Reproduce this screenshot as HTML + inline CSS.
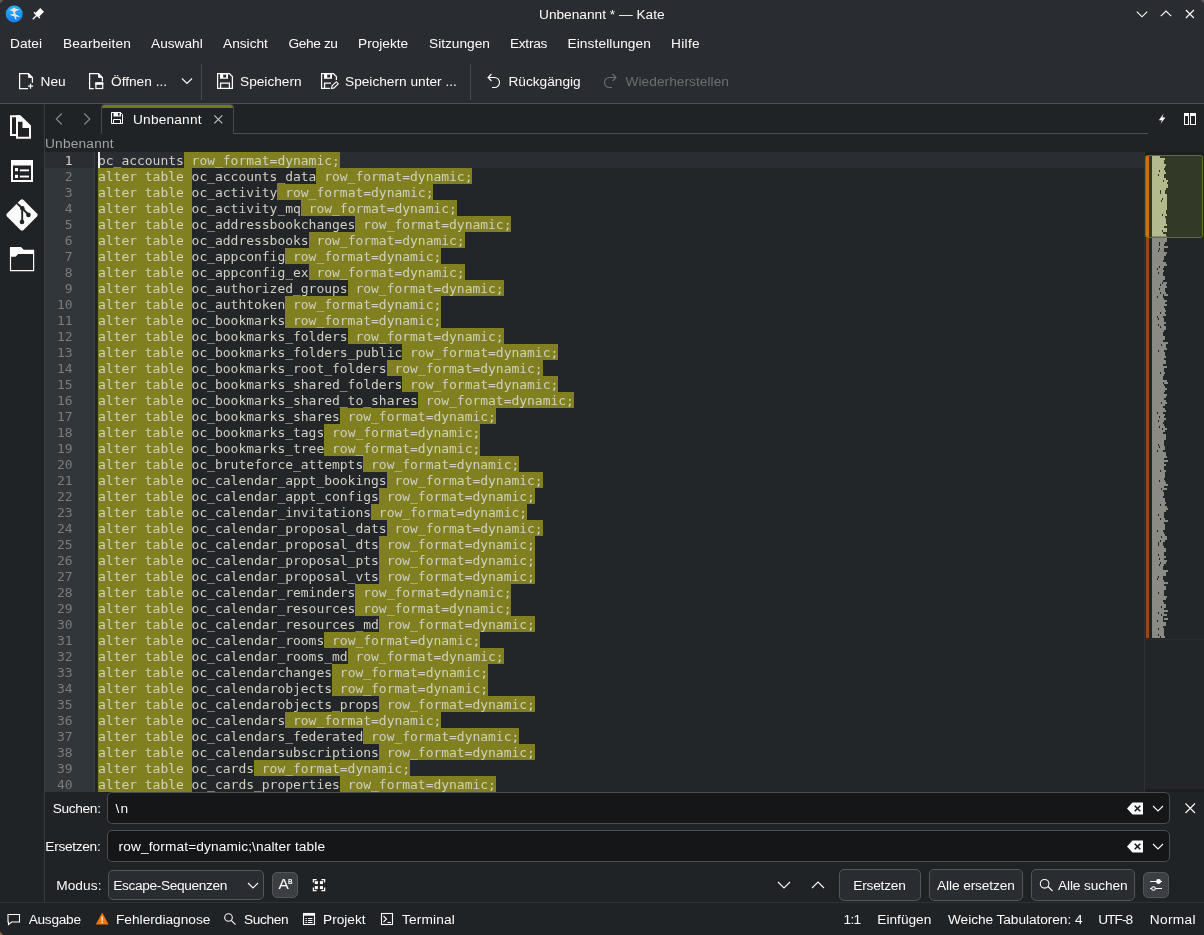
<!DOCTYPE html>
<html lang="de">
<head>
<meta charset="utf-8">
<title>Unbenannt * — Kate</title>
<style>
*{box-sizing:border-box;margin:0;padding:0}
html,body{width:1204px;height:935px;overflow:hidden;background:#202326}
body{position:relative;font-family:"Liberation Sans",sans-serif;font-size:13.7px;color:#fcfcfc}
.abs,.t{position:absolute}
.t{white-space:nowrap;line-height:16px;height:16px}
svg{position:absolute;overflow:visible}
#titlebar{position:absolute;left:0;top:0;width:1204px;height:28px;background:#292c30}
#menubar{position:absolute;left:0;top:28px;width:1204px;height:32px;background:#292c30}
#toolbar{position:absolute;left:0;top:60px;width:1204px;height:43px;background:#292c30}
#tbline{position:absolute;left:0;top:103px;width:1204px;height:1px;background:#4c4f53}
#sidebar{position:absolute;left:0;top:104px;width:44px;height:801px;background:#202326}
#sideline{position:absolute;left:44px;top:104px;width:1px;height:798px;background:#393c3f}
#tabbar{position:absolute;left:45px;top:104px;width:1159px;height:30px;background:#202326}
#tabline{position:absolute;left:234px;top:133px;width:914px;height:1px;background:#4c4f53}
#tab{position:absolute;left:101px;top:104px;width:133px;height:30px;background:#202326;border:1px solid #46494c;border-bottom:none;border-radius:4px 4px 0 0;overflow:hidden}
#tab:before{content:"";position:absolute;left:0;top:0;right:0;height:3px;background:#6c7d1f}
#crumb{position:absolute;left:45px;top:134px;width:1159px;height:18px;background:#202326}
#editor{position:absolute;left:45px;top:152px;width:1100px;height:640px;background:#232629;overflow:hidden;
 font-family:"DejaVu Sans Mono","Liberation Mono",monospace;font-size:13px;color:#cfcfc2;letter-spacing:-0.026px}
#gutter{position:absolute;left:0;top:0;width:49px;height:640px;background:#31363b}
#edsep{position:absolute;left:1099px;top:0;width:1px;height:640px;background:#2e3236}
#gutsep{position:absolute;left:49px;top:0;width:1px;height:640px;background:#3a3f44}
#editor p{position:relative;height:16px;line-height:18px;white-space:pre;padding-left:53px}
#editor p.cur{background:linear-gradient(to right,#2a2e32 0,#2a2e32 49px,#3a3f44 49px,#3a3f44 50px,#232629 50px,#232629 53px,#2a2e32 53px)}
#editor i{position:absolute;left:0;top:0;width:27.6px;text-align:right;font-style:normal;color:#7a7c7d}
#editor p.cur i{color:#cfcfc2}
#editor b{font-weight:normal;background:#808021;display:inline-block;height:16px;vertical-align:top}
#cursor{position:absolute;left:53px;top:0;width:2px;height:16px;background:#ececec}
#minimap{position:absolute;left:1145px;top:152px;width:59px;height:640px;background:#232629}
#searchbar{position:absolute;left:45px;top:792px;width:1159px;height:113px;background:#202326}
#statusbar{position:absolute;left:0;top:902px;width:1204px;height:33px;background:#202326;border-top:1px solid #2f3235}
.inp{position:absolute;background:#141618;border:1px solid #4a4d51;border-radius:5px}
.btn{position:absolute;background:#292c30;border:1px solid #54575a;border-radius:5px}
.btn.on{background:#3b3e42;border-color:#54575a}
.lbl{color:#fcfcfc}
</style>
</head>
<body><div id="app" style="position:absolute;left:0;top:0;width:1204px;height:935px;will-change:transform">
<div id="titlebar">
 <svg style="left:5px;top:5px" width="18" height="18" viewBox="0 0 18 18">
  <defs><linearGradient id="kg" x1="0" y1="0" x2="0" y2="1"><stop offset="0" stop-color="#21b4f7"/><stop offset="1" stop-color="#1a7bf0"/></linearGradient></defs>
  <circle cx="9.2" cy="9" r="8.5" fill="url(#kg)"/>
  <path d="M3.8 4.9 C6 4.7 8 3.6 9.3 2.2 C9.9 3.7 12 4.3 14.6 4 C12.6 5.4 10.8 6.2 9.9 7.2 C10.1 8.2 10.5 9 11.1 9.6 C12.6 10.2 14 11 15 12 C13.6 11.7 12.2 11.5 11.2 11.5 C11.1 12.8 11.2 14.2 11.4 15.6 C10.2 14.2 9.5 12.8 9.1 11.2 C7.5 11.1 6 10.5 4.8 9.5 C6.2 9.5 7.6 9.2 8.6 8.7 C8.3 7.9 8.1 7.3 8 6.8 C6.9 5.8 5.4 5.1 3.8 4.9 Z" fill="#e6e2dc"/>
 </svg>
 <svg style="left:30px;top:4px" width="18" height="18" viewBox="30 4 18 18"><g transform="translate(36.9 15.1) rotate(-45)" fill="#fcfcfc"><rect x="-5.8" y="-0.65" width="6" height="1.3"/><rect x="-0.7" y="-4.1" width="1.4" height="8.2"/><rect x="0" y="-2.6" width="7.4" height="5.2"/></g></svg>
 <span class="t" style="left:539px;top:7px">Unbenannt * — Kate</span>
 <svg style="left:1130px;top:2px" width="72" height="24" viewBox="0 0 72 24" fill="none" stroke="#fcfcfc" stroke-width="1.15">
  <path d="M6.8 9.6 L12 14.8 L17.2 9.6"/>
  <path d="M30.8 14.2 L36 9 L41.2 14.2"/>
  <path d="M55.9 8 L63.9 16 M63.9 8 L55.9 16"/>
 </svg>
</div>
<div id="menubar">
 <span class="t" style="left:10px;top:8px">Datei</span>
 <span class="t" style="left:63px;top:8px;letter-spacing:0.19px">Bearbeiten</span>
 <span class="t" style="left:151px;top:8px">Auswahl</span>
 <span class="t" style="left:223px;top:8px">Ansicht</span>
 <span class="t" style="left:288.5px;top:8px;letter-spacing:-0.38px">Gehe zu</span>
 <span class="t" style="left:358px;top:8px">Projekte</span>
 <span class="t" style="left:429px;top:8px">Sitzungen</span>
 <span class="t" style="left:510px;top:8px;letter-spacing:-0.3px">Extras</span>
 <span class="t" style="left:567.5px;top:8px;letter-spacing:0.1px">Einstellungen</span>
 <span class="t" style="left:671px;top:8px;letter-spacing:0.32px">Hilfe</span>
</div>
<div id="toolbar">
 <!-- new -->
 <svg style="left:18px;top:13px" width="16" height="16" viewBox="0 0 16 16" fill="none" stroke="#fcfcfc" stroke-width="1.25" stroke-linejoin="miter">
  <path d="M10 15.5 H1.6 V0.6 H10.5 L14.4 4.5 V9.8"/><path d="M10.5 0.6 L14.4 4.5 H10.5 Z" fill="#fcfcfc" stroke-width="0.8"/><path d="M12.5 10.7 V15.8 M10 13.2 H15.1"/>
 </svg>
 <span class="t" style="left:40.5px;top:14px">Neu</span>
 <!-- open -->
 <svg style="left:88px;top:13px" width="16" height="16" viewBox="0 0 16 16" fill="none" stroke="#fcfcfc" stroke-width="1.25" stroke-linejoin="miter">
  <path d="M5.8 15.5 H1.6 V0.6 H10.5 L14.4 4.5 V8.4"/><path d="M10.5 0.6 L14.4 4.5 H10.5 Z" fill="#fcfcfc" stroke-width="0.8"/><rect x="7.9" y="10" width="6.8" height="5.5" stroke-width="1.2"/><rect x="7.3" y="9.4" width="8" height="2.4" fill="#fcfcfc" stroke="none"/>
 </svg>
 <span class="t" style="left:111px;top:14px">Öffnen ...</span>
 <svg style="left:181px;top:17px" width="12" height="8" viewBox="0 0 12 8" fill="none" stroke="#fcfcfc" stroke-width="1.1"><path d="M1 1.5 L6 6.5 L11 1.5"/></svg>
 <div class="abs" style="left:201px;top:4px;width:1px;height:36px;background:#46494c"></div>
 <!-- save -->
 <svg style="left:217px;top:13px" width="16" height="16" viewBox="0 0 16 16" fill="none" stroke="#fcfcfc" stroke-width="1.25">
  <path d="M0.6 0.6 H12.4 L15.4 3.6 V15.4 H0.6 Z"/><path d="M3 0.6 H11 V5.8 H3 Z M6.2 1.6 V4.4 H9.2 V1.6 Z" fill="#fcfcfc" fill-rule="evenodd" stroke="none"/><path d="M3.6 15.4 V10.2 H12.4 V15.4"/>
 </svg>
 <span class="t" style="left:240px;top:14px">Speichern</span>
 <!-- save as -->
 <svg style="left:321px;top:13px" width="18" height="16" viewBox="0 0 18 16" fill="none" stroke="#fcfcfc" stroke-width="1.25">
  <path d="M9 15.4 H0.6 V0.6 H12.4 L15.4 3.6 V7"/><path d="M3 0.6 H11 V5.8 H3 Z M6.2 1.6 V4.4 H9.2 V1.6 Z" fill="#fcfcfc" fill-rule="evenodd" stroke="none"/><path d="M3.6 15.4 V10.2 H10"/><path d="M10.4 15.6 L11.1 12.9 L15.3 8.7 L17.3 10.7 L13.1 14.9 Z" stroke-width="1.1"/>
 </svg>
 <span class="t" style="left:345px;top:14px">Speichern unter ...</span>
 <div class="abs" style="left:470px;top:4px;width:1px;height:36px;background:#46494c"></div>
 <!-- undo -->
 <svg style="left:486px;top:13px" width="16" height="16" viewBox="0 0 16 16" fill="none" stroke="#fcfcfc" stroke-width="1.1">
  <path d="M2.5 4.5 H8.5 A5 5 0 0 1 8.5 14.5 H6"/><path d="M5.5 1 L2 4.5 L5.5 8"/>
 </svg>
 <span class="t" style="left:508.4px;top:14px">Rückgängig</span>
 <!-- redo -->
 <svg style="left:602px;top:13px" width="16" height="16" viewBox="0 0 16 16" fill="none" stroke="#6c6f72" stroke-width="1.1">
  <path d="M13.5 4.5 H7.5 A5 5 0 0 0 7.5 14.5 H10"/><path d="M10.5 1 L14 4.5 L10.5 8"/>
 </svg>
 <span class="t" style="left:625.5px;top:14px;color:#6c6f72;letter-spacing:0.05px">Wiederherstellen</span>
</div>
<div id="tbline"></div>
<div id="sidebar">
 <!-- documents -->
 <svg style="left:0;top:0" width="44" height="180" viewBox="0 104 44 180">
  <g fill="none" stroke="#fcfcfc" stroke-width="2">
   <path d="M20 116.2 H11 V135 H16"/>
   <path d="M23 120.5 H17 V137.8 H30 V127"/>
  </g>
  <path d="M16 115.2 H20.4 L31 125.4 V128 H22.5 V121.5 H16 Z" fill="#fcfcfc"/>
  <!-- list -->
  <rect x="12" y="161" width="20" height="20" fill="none" stroke="#fcfcfc" stroke-width="2"/>
  <rect x="11" y="160" width="22" height="5.5" fill="#fcfcfc"/>
  <rect x="15" y="168" width="3" height="3.2" fill="#fcfcfc"/><rect x="19.8" y="169.4" width="9.2" height="1.9" fill="#fcfcfc"/>
  <rect x="15" y="174.8" width="3" height="3.2" fill="#fcfcfc"/><rect x="19.8" y="175.6" width="9.2" height="1.9" fill="#fcfcfc"/>
  <!-- git -->
  <rect x="10.3" y="203.3" width="23.4" height="23.4" rx="2.2" transform="rotate(45 22 215)" fill="#fcfcfc"/>
  <g stroke="#202326" stroke-width="1.9" fill="none"><path d="M17 203.4 L22.3 208.3 L28.5 214.8 M22.2 208 V222"/></g>
  <circle cx="22.3" cy="208.2" r="2.2" fill="#202326"/><circle cx="28.4" cy="214.9" r="2.3" fill="#202326"/><circle cx="22" cy="222" r="2.3" fill="#202326"/>
  <!-- folder -->
  <path d="M10.5 248 V270.6 H33.6 V250" fill="none" stroke="#fcfcfc" stroke-width="1.2"/>
  <path d="M10 247 H21 L23.7 249.7 H34 V254 H18.2 L15.5 256.7 H10 Z" fill="#fcfcfc"/>
 </svg>
</div>
<div id="sideline"></div>
<div id="tabbar"></div>
<div id="tabline"></div>
<div id="tab"></div>
<svg style="left:45px;top:104px" width="200" height="30" viewBox="45 104 200 30" fill="none">
 <path d="M61.8 113.5 L56.3 119 L61.8 124.5" stroke="#888a8c" stroke-width="1.1"/>
 <path d="M84.3 113.5 L89.8 119 L84.3 124.5" stroke="#888a8c" stroke-width="1.1"/>
 <!-- save small -->
 <path d="M111.5 112.5 H120.5 L122.5 114.5 V123.5 H111.5 Z" stroke="#fcfcfc" stroke-width="1"/>
 <path d="M111 112 H120.6 L121 112.4 V116.6 H113.5 V112 Z M118 113 V115.6 H119.6 V113 Z" fill="#fcfcfc" fill-rule="evenodd"/>
 <path d="M113.5 123.5 V119.5 H120.5 V123.5" stroke="#fcfcfc" stroke-width="1"/>
 <path d="M214.3 115.3 L222.3 123.3 M222.3 115.3 L214.3 123.3" stroke="#c4c5c6" stroke-width="1.1"/>
</svg>
<span class="t" style="left:133px;top:112px;letter-spacing:0.19px">Unbenannt</span>
<svg style="left:1150px;top:108px" width="54" height="22" viewBox="1150 108 54 22">
 <path d="M1163.5 113.8 L1158.8 120.2 H1161.9 L1160.4 124 L1165.4 117.6 H1162.4 Z" fill="#fcfcfc"/>
 <path d="M1184 113 H1189 V125 H1184 Z M1185 116 V124 H1188 V116 Z M1190 113 H1196 V125 H1190 Z M1191 116 V124 H1195 V116 Z" fill="#fcfcfc" fill-rule="evenodd"/>
</svg>
<div id="crumb"><span class="t" style="left:0;top:2px;color:#a1a3a4;letter-spacing:0.2px">Unbenannt</span></div>
<div id="editor"><div id="gutter"></div><div id="gutsep"></div>
<p class="cur"><i>1</i>oc_accounts<b> row_format=dynamic;</b></p>
<p><i>2</i><b>alter table </b>oc_accounts_data<b> row_format=dynamic;</b></p>
<p><i>3</i><b>alter table </b>oc_activity<b> row_format=dynamic;</b></p>
<p><i>4</i><b>alter table </b>oc_activity_mq<b> row_format=dynamic;</b></p>
<p><i>5</i><b>alter table </b>oc_addressbookchanges<b> row_format=dynamic;</b></p>
<p><i>6</i><b>alter table </b>oc_addressbooks<b> row_format=dynamic;</b></p>
<p><i>7</i><b>alter table </b>oc_appconfig<b> row_format=dynamic;</b></p>
<p><i>8</i><b>alter table </b>oc_appconfig_ex<b> row_format=dynamic;</b></p>
<p><i>9</i><b>alter table </b>oc_authorized_groups<b> row_format=dynamic;</b></p>
<p><i>10</i><b>alter table </b>oc_authtoken<b> row_format=dynamic;</b></p>
<p><i>11</i><b>alter table </b>oc_bookmarks<b> row_format=dynamic;</b></p>
<p><i>12</i><b>alter table </b>oc_bookmarks_folders<b> row_format=dynamic;</b></p>
<p><i>13</i><b>alter table </b>oc_bookmarks_folders_public<b> row_format=dynamic;</b></p>
<p><i>14</i><b>alter table </b>oc_bookmarks_root_folders<b> row_format=dynamic;</b></p>
<p><i>15</i><b>alter table </b>oc_bookmarks_shared_folders<b> row_format=dynamic;</b></p>
<p><i>16</i><b>alter table </b>oc_bookmarks_shared_to_shares<b> row_format=dynamic;</b></p>
<p><i>17</i><b>alter table </b>oc_bookmarks_shares<b> row_format=dynamic;</b></p>
<p><i>18</i><b>alter table </b>oc_bookmarks_tags<b> row_format=dynamic;</b></p>
<p><i>19</i><b>alter table </b>oc_bookmarks_tree<b> row_format=dynamic;</b></p>
<p><i>20</i><b>alter table </b>oc_bruteforce_attempts<b> row_format=dynamic;</b></p>
<p><i>21</i><b>alter table </b>oc_calendar_appt_bookings<b> row_format=dynamic;</b></p>
<p><i>22</i><b>alter table </b>oc_calendar_appt_configs<b> row_format=dynamic;</b></p>
<p><i>23</i><b>alter table </b>oc_calendar_invitations<b> row_format=dynamic;</b></p>
<p><i>24</i><b>alter table </b>oc_calendar_proposal_dats<b> row_format=dynamic;</b></p>
<p><i>25</i><b>alter table </b>oc_calendar_proposal_dts<b> row_format=dynamic;</b></p>
<p><i>26</i><b>alter table </b>oc_calendar_proposal_pts<b> row_format=dynamic;</b></p>
<p><i>27</i><b>alter table </b>oc_calendar_proposal_vts<b> row_format=dynamic;</b></p>
<p><i>28</i><b>alter table </b>oc_calendar_reminders<b> row_format=dynamic;</b></p>
<p><i>29</i><b>alter table </b>oc_calendar_resources<b> row_format=dynamic;</b></p>
<p><i>30</i><b>alter table </b>oc_calendar_resources_md<b> row_format=dynamic;</b></p>
<p><i>31</i><b>alter table </b>oc_calendar_rooms<b> row_format=dynamic;</b></p>
<p><i>32</i><b>alter table </b>oc_calendar_rooms_md<b> row_format=dynamic;</b></p>
<p><i>33</i><b>alter table </b>oc_calendarchanges<b> row_format=dynamic;</b></p>
<p><i>34</i><b>alter table </b>oc_calendarobjects<b> row_format=dynamic;</b></p>
<p><i>35</i><b>alter table </b>oc_calendarobjects_props<b> row_format=dynamic;</b></p>
<p><i>36</i><b>alter table </b>oc_calendars<b> row_format=dynamic;</b></p>
<p><i>37</i><b>alter table </b>oc_calendars_federated<b> row_format=dynamic;</b></p>
<p><i>38</i><b>alter table </b>oc_calendarsubscriptions<b> row_format=dynamic;</b></p>
<p><i>39</i><b>alter table </b>oc_cards<b> row_format=dynamic;</b></p>
<p><i>40</i><b>alter table </b>oc_cards_properties<b> row_format=dynamic;</b></p><div id="cursor"></div><div id="edsep"></div></div>
<div id="minimap">
<svg style="left:0;top:0" width="59" height="640" viewBox="0 0 59 640" shape-rendering="crispEdges">
<rect x="0" y="0" width="59" height="3" fill="#1b1d20"/>
<rect x="0" y="637" width="59" height="3" fill="#1b1d20"/>
<rect x="0" y="487" width="59" height="1" fill="#2a2d30"/>
<rect x="1" y="4" width="3" height="482" fill="#9b471b"/>
<rect x="7" y="4" width="8" height="2" fill="#bdc1a5"/>
<rect x="7" y="6" width="13" height="2" fill="#bdc1a5"/>
<rect x="7" y="8" width="12" height="2" fill="#bdc1a5"/>
<rect x="7" y="10" width="12" height="2" fill="#bdc1a5"/>
<rect x="7" y="12" width="14" height="2" fill="#bdc1a5"/>
<rect x="7" y="14" width="13" height="2" fill="#bdc1a5"/>
<rect x="7" y="16" width="12" height="2" fill="#bdc1a5"/>
<rect x="7" y="18" width="7" height="2" fill="#bdc1a5"/><rect x="15" y="18" width="5" height="2" fill="#bdc1a5"/>
<rect x="7" y="20" width="14" height="2" fill="#bdc1a5"/>
<rect x="7" y="22" width="6" height="2" fill="#bdc1a5"/><rect x="14" y="22" width="5" height="2" fill="#bdc1a5"/>
<rect x="7" y="24" width="12" height="2" fill="#bdc1a5"/>
<rect x="7" y="26" width="14" height="2" fill="#bdc1a5"/>
<rect x="7" y="28" width="11" height="2" fill="#bdc1a5"/><rect x="19" y="28" width="4" height="2" fill="#bdc1a5"/>
<rect x="7" y="30" width="15" height="2" fill="#bdc1a5"/>
<rect x="7" y="32" width="16" height="2" fill="#bdc1a5"/>
<rect x="7" y="34" width="16" height="2" fill="#bdc1a5"/>
<rect x="7" y="36" width="14" height="2" fill="#bdc1a5"/>
<rect x="7" y="38" width="8" height="2" fill="#bdc1a5"/><rect x="16" y="38" width="4" height="2" fill="#bdc1a5"/>
<rect x="7" y="40" width="8" height="2" fill="#bdc1a5"/><rect x="16" y="40" width="4" height="2" fill="#bdc1a5"/>
<rect x="7" y="42" width="15" height="2" fill="#bdc1a5"/>
<rect x="7" y="44" width="15" height="2" fill="#bdc1a5"/>
<rect x="7" y="46" width="10" height="2" fill="#bdc1a5"/><rect x="18" y="46" width="4" height="2" fill="#bdc1a5"/>
<rect x="7" y="48" width="9" height="2" fill="#bdc1a5"/><rect x="17" y="48" width="5" height="2" fill="#bdc1a5"/>
<rect x="7" y="50" width="15" height="2" fill="#bdc1a5"/>
<rect x="7" y="52" width="15" height="2" fill="#bdc1a5"/>
<rect x="7" y="54" width="15" height="2" fill="#bdc1a5"/>
<rect x="7" y="56" width="15" height="2" fill="#bdc1a5"/>
<rect x="7" y="58" width="14" height="2" fill="#bdc1a5"/>
<rect x="7" y="60" width="14" height="2" fill="#bdc1a5"/>
<rect x="7" y="62" width="10" height="2" fill="#bdc1a5"/><rect x="18" y="62" width="4" height="2" fill="#bdc1a5"/>
<rect x="7" y="64" width="13" height="2" fill="#bdc1a5"/>
<rect x="7" y="66" width="14" height="2" fill="#bdc1a5"/>
<rect x="7" y="68" width="14" height="2" fill="#bdc1a5"/>
<rect x="7" y="70" width="14" height="2" fill="#bdc1a5"/>
<rect x="7" y="72" width="15" height="2" fill="#bdc1a5"/>
<rect x="7" y="74" width="12" height="2" fill="#bdc1a5"/>
<rect x="7" y="76" width="15" height="2" fill="#bdc1a5"/>
<rect x="7" y="78" width="10" height="2" fill="#bdc1a5"/><rect x="18" y="78" width="4" height="2" fill="#bdc1a5"/>
<rect x="7" y="80" width="11" height="2" fill="#bdc1a5"/>
<rect x="7" y="82" width="14" height="2" fill="#bdc1a5"/>
<rect x="7" y="84" width="15" height="2" fill="#8b8b85"/>
<rect x="7" y="86" width="15" height="2" fill="#8b8b85"/>
<rect x="7" y="88" width="15" height="2" fill="#8b8b85"/>
<rect x="7" y="90" width="7" height="2" fill="#8b8b85"/><rect x="15" y="90" width="5" height="2" fill="#8b8b85"/>
<rect x="7" y="92" width="7" height="2" fill="#8b8b85"/><rect x="15" y="92" width="4" height="2" fill="#8b8b85"/>
<rect x="7" y="94" width="16" height="2" fill="#8b8b85"/>
<rect x="7" y="96" width="7" height="2" fill="#8b8b85"/><rect x="15" y="96" width="4" height="2" fill="#8b8b85"/>
<rect x="7" y="98" width="6" height="2" fill="#8b8b85"/><rect x="14" y="98" width="5" height="2" fill="#8b8b85"/>
<rect x="7" y="100" width="15" height="2" fill="#8b8b85"/>
<rect x="7" y="102" width="14" height="2" fill="#8b8b85"/>
<rect x="7" y="104" width="12" height="2" fill="#8b8b85"/>
<rect x="7" y="106" width="12" height="2" fill="#8b8b85"/>
<rect x="7" y="108" width="11" height="2" fill="#8b8b85"/>
<rect x="7" y="110" width="14" height="2" fill="#8b8b85"/>
<rect x="7" y="112" width="15" height="2" fill="#8b8b85"/>
<rect x="7" y="114" width="7" height="2" fill="#8b8b85"/><rect x="15" y="114" width="4" height="2" fill="#8b8b85"/>
<rect x="7" y="116" width="5" height="2" fill="#8b8b85"/><rect x="13" y="116" width="5" height="2" fill="#8b8b85"/>
<rect x="7" y="118" width="12" height="2" fill="#8b8b85"/>
<rect x="7" y="120" width="6" height="2" fill="#8b8b85"/><rect x="14" y="120" width="4" height="2" fill="#8b8b85"/>
<rect x="7" y="122" width="11" height="2" fill="#8b8b85"/>
<rect x="7" y="124" width="13" height="2" fill="#8b8b85"/>
<rect x="7" y="126" width="13" height="2" fill="#8b8b85"/>
<rect x="7" y="128" width="11" height="2" fill="#8b8b85"/>
<rect x="7" y="130" width="10" height="2" fill="#8b8b85"/><rect x="18" y="130" width="4" height="2" fill="#8b8b85"/>
<rect x="7" y="132" width="8" height="2" fill="#8b8b85"/><rect x="16" y="132" width="5" height="2" fill="#8b8b85"/>
<rect x="7" y="134" width="15" height="2" fill="#8b8b85"/>
<rect x="7" y="136" width="7" height="2" fill="#8b8b85"/><rect x="15" y="136" width="5" height="2" fill="#8b8b85"/>
<rect x="7" y="138" width="13" height="2" fill="#8b8b85"/>
<rect x="7" y="140" width="8" height="2" fill="#8b8b85"/><rect x="16" y="140" width="5" height="2" fill="#8b8b85"/>
<rect x="7" y="142" width="11" height="2" fill="#8b8b85"/><rect x="19" y="142" width="4" height="2" fill="#8b8b85"/>
<rect x="7" y="144" width="5" height="2" fill="#8b8b85"/><rect x="13" y="144" width="5" height="2" fill="#8b8b85"/>
<rect x="7" y="146" width="12" height="2" fill="#8b8b85"/>
<rect x="7" y="148" width="15" height="2" fill="#8b8b85"/>
<rect x="7" y="150" width="13" height="2" fill="#8b8b85"/>
<rect x="7" y="152" width="15" height="2" fill="#8b8b85"/>
<rect x="7" y="154" width="12" height="2" fill="#8b8b85"/>
<rect x="7" y="156" width="13" height="2" fill="#8b8b85"/>
<rect x="7" y="158" width="14" height="2" fill="#8b8b85"/>
<rect x="7" y="160" width="8" height="2" fill="#8b8b85"/><rect x="16" y="160" width="4" height="2" fill="#8b8b85"/>
<rect x="7" y="162" width="14" height="2" fill="#8b8b85"/>
<rect x="7" y="164" width="5" height="2" fill="#8b8b85"/><rect x="13" y="164" width="5" height="2" fill="#8b8b85"/>
<rect x="7" y="166" width="6" height="2" fill="#8b8b85"/><rect x="14" y="166" width="5" height="2" fill="#8b8b85"/>
<rect x="7" y="168" width="12" height="2" fill="#8b8b85"/>
<rect x="7" y="170" width="14" height="2" fill="#8b8b85"/>
<rect x="7" y="172" width="6" height="2" fill="#8b8b85"/><rect x="14" y="172" width="5" height="2" fill="#8b8b85"/>
<rect x="7" y="174" width="8" height="2" fill="#8b8b85"/><rect x="16" y="174" width="5" height="2" fill="#8b8b85"/>
<rect x="7" y="176" width="14" height="2" fill="#8b8b85"/>
<rect x="7" y="178" width="12" height="2" fill="#8b8b85"/>
<rect x="7" y="180" width="11" height="2" fill="#8b8b85"/>
<rect x="7" y="182" width="11" height="2" fill="#8b8b85"/>
<rect x="7" y="184" width="13" height="2" fill="#8b8b85"/>
<rect x="7" y="186" width="13" height="2" fill="#8b8b85"/>
<rect x="7" y="188" width="11" height="2" fill="#8b8b85"/>
<rect x="7" y="190" width="16" height="2" fill="#8b8b85"/>
<rect x="7" y="192" width="9" height="2" fill="#8b8b85"/><rect x="17" y="192" width="4" height="2" fill="#8b8b85"/>
<rect x="7" y="194" width="14" height="2" fill="#8b8b85"/>
<rect x="7" y="196" width="15" height="2" fill="#8b8b85"/>
<rect x="7" y="198" width="6" height="2" fill="#8b8b85"/><rect x="14" y="198" width="5" height="2" fill="#8b8b85"/>
<rect x="7" y="200" width="13" height="2" fill="#8b8b85"/>
<rect x="7" y="202" width="13" height="2" fill="#8b8b85"/>
<rect x="7" y="204" width="14" height="2" fill="#8b8b85"/>
<rect x="7" y="206" width="12" height="2" fill="#8b8b85"/>
<rect x="7" y="208" width="14" height="2" fill="#8b8b85"/>
<rect x="7" y="210" width="14" height="2" fill="#8b8b85"/>
<rect x="7" y="212" width="11" height="2" fill="#8b8b85"/>
<rect x="7" y="214" width="15" height="2" fill="#8b8b85"/>
<rect x="7" y="216" width="12" height="2" fill="#8b8b85"/>
<rect x="7" y="218" width="12" height="2" fill="#8b8b85"/>
<rect x="7" y="220" width="8" height="2" fill="#8b8b85"/><rect x="16" y="220" width="4" height="2" fill="#8b8b85"/>
<rect x="7" y="222" width="12" height="2" fill="#8b8b85"/>
<rect x="7" y="224" width="11" height="2" fill="#8b8b85"/>
<rect x="7" y="226" width="11" height="2" fill="#8b8b85"/>
<rect x="7" y="228" width="15" height="2" fill="#8b8b85"/>
<rect x="7" y="230" width="11" height="2" fill="#8b8b85"/><rect x="19" y="230" width="4" height="2" fill="#8b8b85"/>
<rect x="7" y="232" width="12" height="2" fill="#8b8b85"/>
<rect x="7" y="234" width="13" height="2" fill="#8b8b85"/>
<rect x="7" y="236" width="15" height="2" fill="#8b8b85"/>
<rect x="7" y="238" width="13" height="2" fill="#8b8b85"/>
<rect x="7" y="240" width="12" height="2" fill="#8b8b85"/>
<rect x="7" y="242" width="15" height="2" fill="#8b8b85"/>
<rect x="7" y="244" width="14" height="2" fill="#8b8b85"/>
<rect x="7" y="246" width="12" height="2" fill="#8b8b85"/>
<rect x="7" y="248" width="14" height="2" fill="#8b8b85"/>
<rect x="7" y="250" width="9" height="2" fill="#8b8b85"/><rect x="17" y="250" width="5" height="2" fill="#8b8b85"/>
<rect x="7" y="252" width="13" height="2" fill="#8b8b85"/>
<rect x="7" y="254" width="11" height="2" fill="#8b8b85"/>
<rect x="7" y="256" width="13" height="2" fill="#8b8b85"/>
<rect x="7" y="258" width="14" height="2" fill="#8b8b85"/>
<rect x="7" y="260" width="5" height="2" fill="#8b8b85"/><rect x="13" y="260" width="5" height="2" fill="#8b8b85"/>
<rect x="7" y="262" width="13" height="2" fill="#8b8b85"/>
<rect x="7" y="264" width="7" height="2" fill="#8b8b85"/><rect x="15" y="264" width="4" height="2" fill="#8b8b85"/>
<rect x="7" y="266" width="14" height="2" fill="#8b8b85"/>
<rect x="7" y="268" width="6" height="2" fill="#8b8b85"/><rect x="14" y="268" width="5" height="2" fill="#8b8b85"/>
<rect x="7" y="270" width="11" height="2" fill="#8b8b85"/>
<rect x="7" y="272" width="12" height="2" fill="#8b8b85"/>
<rect x="7" y="274" width="7" height="2" fill="#8b8b85"/><rect x="15" y="274" width="5" height="2" fill="#8b8b85"/>
<rect x="7" y="276" width="10" height="2" fill="#8b8b85"/><rect x="18" y="276" width="4" height="2" fill="#8b8b85"/>
<rect x="7" y="278" width="13" height="2" fill="#8b8b85"/>
<rect x="7" y="280" width="11" height="2" fill="#8b8b85"/>
<rect x="7" y="282" width="14" height="2" fill="#8b8b85"/>
<rect x="7" y="284" width="14" height="2" fill="#8b8b85"/>
<rect x="7" y="286" width="14" height="2" fill="#8b8b85"/>
<rect x="7" y="288" width="12" height="2" fill="#8b8b85"/>
<rect x="7" y="290" width="12" height="2" fill="#8b8b85"/>
<rect x="7" y="292" width="6" height="2" fill="#8b8b85"/><rect x="14" y="292" width="5" height="2" fill="#8b8b85"/>
<rect x="7" y="294" width="7" height="2" fill="#8b8b85"/><rect x="15" y="294" width="5" height="2" fill="#8b8b85"/>
<rect x="7" y="296" width="13" height="2" fill="#8b8b85"/>
<rect x="7" y="298" width="5" height="2" fill="#8b8b85"/><rect x="13" y="298" width="5" height="2" fill="#8b8b85"/>
<rect x="7" y="300" width="14" height="2" fill="#8b8b85"/>
<rect x="7" y="302" width="14" height="2" fill="#8b8b85"/>
<rect x="7" y="304" width="15" height="2" fill="#8b8b85"/>
<rect x="7" y="306" width="12" height="2" fill="#8b8b85"/>
<rect x="7" y="308" width="16" height="2" fill="#8b8b85"/>
<rect x="7" y="310" width="12" height="2" fill="#8b8b85"/>
<rect x="7" y="312" width="14" height="2" fill="#8b8b85"/>
<rect x="7" y="314" width="12" height="2" fill="#8b8b85"/>
<rect x="7" y="316" width="12" height="2" fill="#8b8b85"/>
<rect x="7" y="318" width="8" height="2" fill="#8b8b85"/><rect x="16" y="318" width="5" height="2" fill="#8b8b85"/>
<rect x="7" y="320" width="13" height="2" fill="#8b8b85"/>
<rect x="7" y="322" width="13" height="2" fill="#8b8b85"/>
<rect x="7" y="324" width="13" height="2" fill="#8b8b85"/>
<rect x="7" y="326" width="12" height="2" fill="#8b8b85"/>
<rect x="7" y="328" width="7" height="2" fill="#8b8b85"/><rect x="15" y="328" width="5" height="2" fill="#8b8b85"/>
<rect x="7" y="330" width="14" height="2" fill="#8b8b85"/>
<rect x="7" y="332" width="16" height="2" fill="#8b8b85"/>
<rect x="7" y="334" width="12" height="2" fill="#8b8b85"/>
<rect x="7" y="336" width="9" height="2" fill="#8b8b85"/><rect x="17" y="336" width="5" height="2" fill="#8b8b85"/>
<rect x="7" y="338" width="11" height="2" fill="#8b8b85"/>
<rect x="7" y="340" width="12" height="2" fill="#8b8b85"/>
<rect x="7" y="342" width="12" height="2" fill="#8b8b85"/>
<rect x="7" y="344" width="11" height="2" fill="#8b8b85"/>
<rect x="7" y="346" width="13" height="2" fill="#8b8b85"/>
<rect x="7" y="348" width="13" height="2" fill="#8b8b85"/>
<rect x="7" y="350" width="14" height="2" fill="#8b8b85"/>
<rect x="7" y="352" width="8" height="2" fill="#8b8b85"/><rect x="16" y="352" width="4" height="2" fill="#8b8b85"/>
<rect x="7" y="354" width="15" height="2" fill="#8b8b85"/>
<rect x="7" y="356" width="16" height="2" fill="#8b8b85"/>
<rect x="7" y="358" width="14" height="2" fill="#8b8b85"/>
<rect x="7" y="360" width="12" height="2" fill="#8b8b85"/>
<rect x="7" y="362" width="6" height="2" fill="#8b8b85"/><rect x="14" y="362" width="5" height="2" fill="#8b8b85"/>
<rect x="7" y="364" width="12" height="2" fill="#8b8b85"/>
<rect x="7" y="366" width="8" height="2" fill="#8b8b85"/><rect x="16" y="366" width="4" height="2" fill="#8b8b85"/>
<rect x="7" y="368" width="16" height="2" fill="#8b8b85"/>
<rect x="7" y="370" width="12" height="2" fill="#8b8b85"/>
<rect x="7" y="372" width="13" height="2" fill="#8b8b85"/>
<rect x="7" y="374" width="13" height="2" fill="#8b8b85"/>
<rect x="7" y="376" width="13" height="2" fill="#8b8b85"/>
<rect x="7" y="378" width="5" height="2" fill="#8b8b85"/><rect x="13" y="378" width="5" height="2" fill="#8b8b85"/>
<rect x="7" y="380" width="12" height="2" fill="#8b8b85"/>
<rect x="7" y="382" width="13" height="2" fill="#8b8b85"/>
<rect x="7" y="384" width="9" height="2" fill="#8b8b85"/><rect x="17" y="384" width="5" height="2" fill="#8b8b85"/>
<rect x="7" y="386" width="15" height="2" fill="#8b8b85"/>
<rect x="7" y="388" width="8" height="2" fill="#8b8b85"/><rect x="16" y="388" width="4" height="2" fill="#8b8b85"/>
<rect x="7" y="390" width="6" height="2" fill="#8b8b85"/><rect x="14" y="390" width="4" height="2" fill="#8b8b85"/>
<rect x="7" y="392" width="6" height="2" fill="#8b8b85"/><rect x="14" y="392" width="4" height="2" fill="#8b8b85"/>
<rect x="7" y="394" width="12" height="2" fill="#8b8b85"/>
<rect x="7" y="396" width="14" height="2" fill="#8b8b85"/>
<rect x="7" y="398" width="14" height="2" fill="#8b8b85"/>
<rect x="7" y="400" width="12" height="2" fill="#8b8b85"/>
<rect x="7" y="402" width="6" height="2" fill="#8b8b85"/><rect x="14" y="402" width="5" height="2" fill="#8b8b85"/>
<rect x="7" y="404" width="14" height="2" fill="#8b8b85"/>
<rect x="7" y="406" width="7" height="2" fill="#8b8b85"/><rect x="15" y="406" width="4" height="2" fill="#8b8b85"/>
<rect x="7" y="408" width="15" height="2" fill="#8b8b85"/>
<rect x="7" y="410" width="8" height="2" fill="#8b8b85"/><rect x="16" y="410" width="5" height="2" fill="#8b8b85"/>
<rect x="7" y="412" width="7" height="2" fill="#8b8b85"/><rect x="15" y="412" width="4" height="2" fill="#8b8b85"/>
<rect x="7" y="414" width="11" height="2" fill="#8b8b85"/>
<rect x="7" y="416" width="11" height="2" fill="#8b8b85"/>
<rect x="7" y="418" width="16" height="2" fill="#8b8b85"/>
<rect x="7" y="420" width="14" height="2" fill="#8b8b85"/>
<rect x="7" y="422" width="14" height="2" fill="#8b8b85"/>
<rect x="7" y="424" width="6" height="2" fill="#8b8b85"/><rect x="14" y="424" width="4" height="2" fill="#8b8b85"/>
<rect x="7" y="426" width="5" height="2" fill="#8b8b85"/><rect x="13" y="426" width="5" height="2" fill="#8b8b85"/>
<rect x="7" y="428" width="12" height="2" fill="#8b8b85"/>
<rect x="7" y="430" width="16" height="2" fill="#8b8b85"/>
<rect x="7" y="432" width="12" height="2" fill="#8b8b85"/>
<rect x="7" y="434" width="14" height="2" fill="#8b8b85"/>
<rect x="7" y="436" width="14" height="2" fill="#8b8b85"/>
<rect x="7" y="438" width="12" height="2" fill="#8b8b85"/>
<rect x="7" y="440" width="6" height="2" fill="#8b8b85"/><rect x="14" y="440" width="5" height="2" fill="#8b8b85"/>
<rect x="7" y="442" width="12" height="2" fill="#8b8b85"/>
<rect x="7" y="444" width="15" height="2" fill="#8b8b85"/>
<rect x="7" y="446" width="14" height="2" fill="#8b8b85"/>
<rect x="7" y="448" width="11" height="2" fill="#8b8b85"/>
<rect x="7" y="450" width="12" height="2" fill="#8b8b85"/>
<rect x="7" y="452" width="14" height="2" fill="#8b8b85"/>
<rect x="7" y="454" width="9" height="2" fill="#8b8b85"/><rect x="17" y="454" width="4" height="2" fill="#8b8b85"/>
<rect x="7" y="456" width="12" height="2" fill="#8b8b85"/>
<rect x="7" y="458" width="16" height="2" fill="#8b8b85"/>
<rect x="7" y="460" width="6" height="2" fill="#8b8b85"/><rect x="14" y="460" width="5" height="2" fill="#8b8b85"/>
<rect x="7" y="462" width="9" height="2" fill="#8b8b85"/><rect x="17" y="462" width="5" height="2" fill="#8b8b85"/>
<rect x="7" y="464" width="11" height="2" fill="#8b8b85"/>
<rect x="7" y="466" width="11" height="2" fill="#8b8b85"/><rect x="19" y="466" width="4" height="2" fill="#8b8b85"/>
<rect x="7" y="468" width="5" height="2" fill="#8b8b85"/><rect x="13" y="468" width="5" height="2" fill="#8b8b85"/>
<rect x="7" y="470" width="14" height="2" fill="#8b8b85"/>
<rect x="7" y="472" width="14" height="2" fill="#8b8b85"/>
<rect x="7" y="474" width="11" height="2" fill="#8b8b85"/>
<rect x="7" y="476" width="6" height="2" fill="#8b8b85"/><rect x="14" y="476" width="5" height="2" fill="#8b8b85"/>
<rect x="7" y="478" width="12" height="2" fill="#8b8b85"/>
<rect x="7" y="480" width="12" height="2" fill="#8b8b85"/>
<rect x="7" y="482" width="6" height="2" fill="#8b8b85"/><rect x="14" y="482" width="5" height="2" fill="#8b8b85"/>
<rect x="7" y="484" width="8" height="2" fill="#8b8b85"/><rect x="16" y="484" width="4" height="2" fill="#8b8b85"/>
</svg>
<svg style="left:0;top:0" width="59" height="640" viewBox="0 0 59 640">
<rect x="1" y="4" width="3" height="81" fill="#e5660a"/>
<rect x="0.5" y="3.5" width="57" height="82" rx="2" fill="#7d9a1e" fill-opacity="0.17" stroke="#5f7616"/>
</svg></div>
<div id="searchbar"></div>
<span class="t" style="left:52.7px;top:801px;letter-spacing:-0.33px">Suchen:</span>
<div class="inp" style="left:107px;top:792px;width:1063px;height:32px"></div>
<span class="t" style="left:115.5px;top:801px;letter-spacing:1.3px">\n</span>
<span class="t" style="left:45.3px;top:839px;letter-spacing:-0.3px">Ersetzen:</span>
<div class="inp" style="left:107px;top:830px;width:1063px;height:32px"></div>
<span class="t" style="left:118.5px;top:839px;letter-spacing:0.123px">row_format=dynamic;\nalter table</span>
<span class="t" style="left:56.2px;top:878px;letter-spacing:0.08px">Modus:</span>
<div class="btn" style="left:108px;top:870px;width:156px;height:30px"></div>
<span class="t" style="left:113.3px;top:878px;letter-spacing:-0.36px">Escape-Sequenzen</span>
<div class="btn on" style="left:272px;top:872px;width:26px;height:26px"></div>
<span class="t" style="left:278.6px;top:876.3px;font-size:15.4px">A</span><span class="t" style="left:288.1px;top:873.5px;font-size:6.3px;font-weight:bold">B</span>
<div class="btn" style="left:839px;top:869px;width:82px;height:32px"></div>
<span class="t" style="left:853.3px;top:878px;letter-spacing:-0.21px">Ersetzen</span>
<div class="btn" style="left:929px;top:869px;width:94px;height:32px"></div>
<span class="t" style="left:937px;top:878px;letter-spacing:-0.1px">Alle ersetzen</span>
<div class="btn" style="left:1031px;top:869px;width:104px;height:32px"></div>
<span class="t" style="left:1058px;top:878px;letter-spacing:-0.12px">Alle suchen</span>
<div class="btn on" style="left:1143px;top:872px;width:26px;height:26px"></div>
<svg style="left:45px;top:792px" width="1159" height="113" viewBox="45 792 1159 113" fill="none" stroke="#fcfcfc" stroke-width="1.1">
 <!-- clear icons -->
 <g><path d="M1127 808.5 L1132.5 802.5 H1143 V814.5 H1132.5 Z" fill="#fcfcfc" stroke="none"/><path d="M1134.7 805.7 L1140.3 811.3 M1140.3 805.7 L1134.7 811.3" stroke="#141618" stroke-width="1.5"/></g>
 <g transform="translate(0 38)"><path d="M1127 808.5 L1132.5 802.5 H1143 V814.5 H1132.5 Z" fill="#fcfcfc" stroke="none"/><path d="M1134.7 805.7 L1140.3 811.3 M1140.3 805.7 L1134.7 811.3" stroke="#141618" stroke-width="1.5"/></g>
 <path d="M1153 806 L1158 811 L1163 806"/>
 <path d="M1153 844 L1158 849 L1163 844"/>
 <path d="M1185.5 803.5 L1195 813 M1195 803.5 L1185.5 813"/>
 <path d="M248 883 L253 888 L258 883"/>
 <!-- selection icon -->
 <g stroke-width="1.3"><path d="M313.4 882.6 V879.6 H316.6 M321.4 879.6 H324.6 V882.6 M324.6 887.6 V890.6 H321.4 M316.6 890.6 H313.4 V887.6"/></g>
 <g fill="#fcfcfc" stroke="none"><rect x="314.8" y="881.1" width="3.1" height="3"/><rect x="319.9" y="881.1" width="3.1" height="3"/><rect x="314.8" y="886.1" width="3.1" height="3"/><rect x="319.9" y="886.1" width="3.1" height="3"/></g>
 <path d="M778 882 L784 888 L790 882"/>
 <path d="M812 888 L818 882 L824 888"/>
 <circle cx="1044.6" cy="883.8" r="4.3"/><path d="M1048 886.5 L1052.5 891"/>
 <!-- options -->
 <path d="M1150 881.5 H1162 M1150 888.5 H1162"/><circle cx="1158.5" cy="881.5" r="1.9" fill="#fcfcfc"/><circle cx="1153.5" cy="888.5" r="1.8" fill="#3a3d41"/>
</svg>
<div id="statusbar"></div>
<svg style="left:0;top:905px" width="460" height="30" viewBox="0 905 460 30" fill="none" stroke="#fcfcfc" stroke-width="1.1">
 <path d="M8 914.5 H19.5 V922 H11.5 L8.5 924.6 V922 H8 Z"/>
 <path d="M102.2 912.6 L108.6 924.6 H95.8 Z" fill="#f67400" stroke="none"/><path d="M102.2 916.5 V920.8 M102.2 921.8 V923.3" stroke="#fcfcfc" stroke-width="1.3"/>
 <circle cx="228.5" cy="917.5" r="3.8"/><path d="M231.2 920.3 L235.5 924.6"/>
 <rect x="303.5" y="913.5" width="11" height="11"/><path d="M303 914.5 H315" stroke-width="2.4"/><path d="M305.5 918.5 H307 M308 918.5 H312.5 M305.5 920.5 H307 M308 920.5 H312.5 M305.5 922.5 H307 M308 922.5 H312.5" stroke-width="1"/>
 <rect x="381.5" y="913.5" width="11" height="11"/><path d="M383.5 916 L386.5 919 L383.5 922 M387.5 922.5 H391"/>
</svg>
<span class="t" style="left:28.7px;top:912px;letter-spacing:-0.28px">Ausgabe</span>
<span class="t" style="left:116px;top:912px">Fehlerdiagnose</span>
<span class="t" style="left:244px;top:912px;letter-spacing:-0.38px">Suchen</span>
<span class="t" style="left:323px;top:912px">Projekt</span>
<span class="t" style="left:402px;top:912px;letter-spacing:0.14px">Terminal</span>
<span class="t" style="left:843.5px;top:912px;letter-spacing:-0.65px">1:1</span>
<span class="t" style="left:877.3px;top:912px">Einfügen</span>
<span class="t" style="left:948px;top:912px;letter-spacing:-0.06px">Weiche Tabulatoren: 4</span>
<span class="t" style="left:1098.2px;top:912px;letter-spacing:-0.97px">UTF-8</span>
<span class="t" style="left:1149.7px;top:912px;letter-spacing:0.36px">Normal</span>
<svg id="corners" style="left:0;top:0" width="1204" height="935" viewBox="0 0 1204 935"><path d="M0 0 H3.5 L0 3.5 Z" fill="#5e5956"/><path d="M1200.5 0 H1204 V3.5 Z" fill="#55565a"/><path d="M0 931.5 V935 H3.5 Z" fill="#7a6040"/></svg>
</div></body></html>
